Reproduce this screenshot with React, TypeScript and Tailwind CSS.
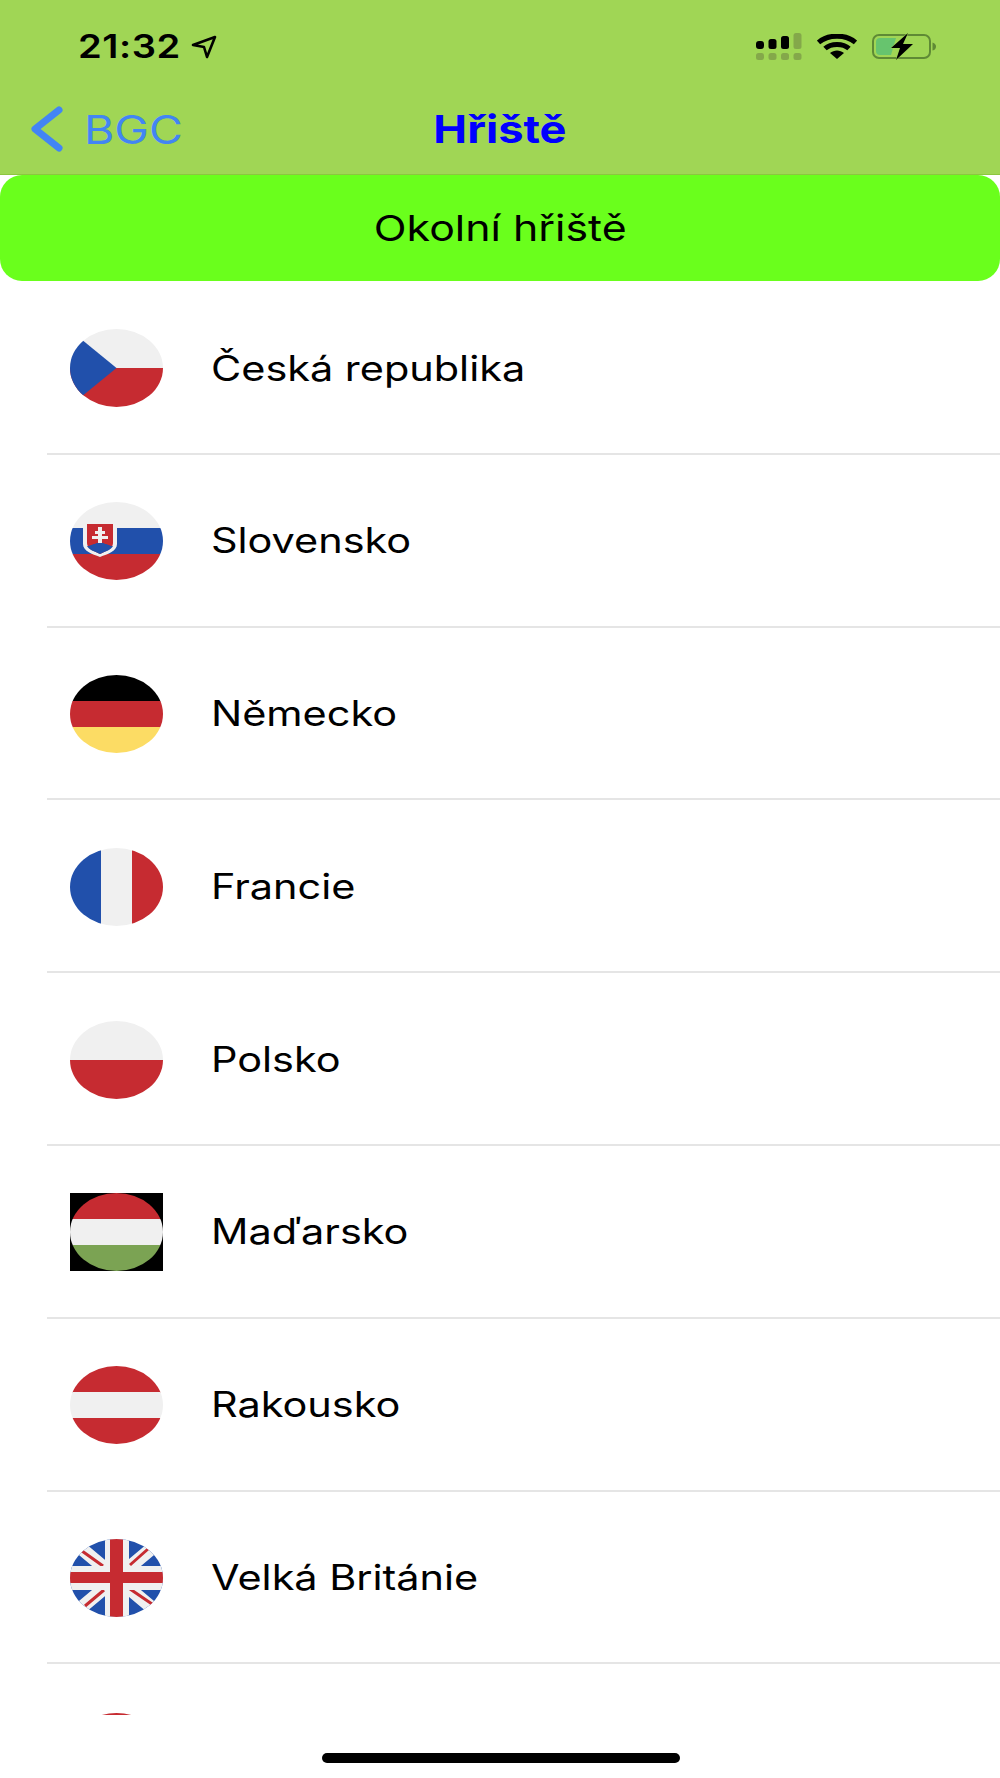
import React from 'react';

const BLUE = '#2150ab';
const RED = '#c62b31';
const WHITE = '#f0f0f0';

const Stripes = ({ colors }: { colors: string[] }) => (
  <>
    {colors.map((c, i) => (
      <rect key={i} x="0" y={(i * 78) / colors.length} width="93" height={78 / colors.length + 0.5} fill={c} />
    ))}
  </>
);

const Flag = ({ code }: { code: string }) => {
  const clipId = `clip-${code}`;
  return (
    <svg viewBox="0 0 93 78" className="w-[93px] h-[78px] shrink-0 mt-[2px]">
      <defs>
        <clipPath id={clipId}>
          <ellipse cx="46.5" cy="39" rx="46.5" ry="39" />
        </clipPath>
      </defs>
      {code === 'hu' && <rect x="0" y="0" width="93" height="78" fill="#000" />}
      <g clipPath={`url(#${clipId})`}>
        {code === 'cz' && (
          <>
            <Stripes colors={[WHITE, RED]} />
            <polygon points="0,1 46.5,39 0,77" fill={BLUE} />
          </>
        )}
        {code === 'sk' && (
          <>
            <Stripes colors={[WHITE, BLUE, RED]} />
            <path d="M13 21 H47 V42 C47 49 38 52 30 55 C22 52 13 49 13 42 Z" fill={WHITE} />
            <path d="M17 22 H43 V41 C43 47 36 49 30 52 C24 49 17 47 17 41 Z" fill={RED} />
            <path d="M17 44 C21 44 22 42 25 42 C27 40 33 40 35 42 C38 42 39 44 43 44 C41 48 36 49 30 52 C24 49 19 48 17 44 Z" fill={BLUE} />
            <path d="M28 25 H32 V29 H35 V32 H32 V34 H38 V37 H32 V41 H28 V37 H22 V34 H28 V32 H25 V29 H28 Z" fill={WHITE} />
          </>
        )}
        {code === 'de' && <Stripes colors={['#000', RED, '#fcdc64']} />}
        {code === 'fr' && (
          <>
            <rect x="0" y="0" width="31" height="78" fill={BLUE} />
            <rect x="31" y="0" width="31" height="78" fill={WHITE} />
            <rect x="62" y="0" width="31" height="78" fill={RED} />
          </>
        )}
        {code === 'pl' && <Stripes colors={[WHITE, RED]} />}
        {code === 'hu' && <Stripes colors={[RED, WHITE, '#7ba353']} />}
        {code === 'at' && <Stripes colors={[RED, WHITE, RED]} />}
        {code === 'gb' && (
          <>
            <rect x="0" y="0" width="93" height="78" fill={BLUE} />
            <path d="M0 0 L93 78 M93 0 L0 78" stroke={WHITE} strokeWidth="13" />
            <path d="M12 12 L33 27 M78 10 L60 26 M15 67 L34 51 M60 50 L82 65" stroke={RED} strokeWidth="3" />
            <rect x="35" y="0" width="24" height="78" fill={WHITE} />
            <rect x="0" y="27" width="93" height="24" fill={WHITE} />
            <rect x="40" y="0" width="13" height="78" fill={RED} />
            <rect x="0" y="33" width="93" height="11" fill={RED} />
          </>
        )}
      </g>
    </svg>
  );
};

const SignalIcon = () => (
  <svg viewBox="0 0 46 27" className="w-[46px] h-[27px]">
    <rect x="0" y="8" width="8" height="8" rx="3" fill="#000" />
    <rect x="12.5" y="6" width="8" height="10" rx="2.5" fill="#000" />
    <rect x="25" y="3" width="8" height="13" rx="2.5" fill="#000" />
    <rect x="37.5" y="0" width="8" height="16" rx="2.5" fill="#84a84a" />
    <rect x="0" y="20" width="8" height="7" rx="2.5" fill="#84a84a" />
    <rect x="12.5" y="20" width="8" height="7" rx="2.5" fill="#84a84a" />
    <rect x="25" y="20" width="8" height="7" rx="2.5" fill="#84a84a" />
    <rect x="37.5" y="20" width="8" height="7" rx="2.5" fill="#84a84a" />
  </svg>
);

const WifiIcon = () => (
  <svg viewBox="0 0 40 25" className="w-[40px] h-[25px]">
    <path d="M1.5 8.5 C11 0 29 0 38.5 8.5" fill="none" stroke="#000" strokeWidth="5" />
    <path d="M8 14.5 C14 9 26 9 32 14.5" fill="none" stroke="#000" strokeWidth="5" />
    <path d="M13 19 L20 25 L27 19 C23 15.5 17 15.5 13 19 Z" fill="#000" />
  </svg>
);

const BatteryIcon = () => (
  <svg viewBox="0 0 65 27" className="w-[65px] h-[27px]">
    <rect x="1" y="2" width="57" height="23" rx="6" fill="none" stroke="#5f8a35" strokeWidth="2" />
    <path d="M4 9 a4 4 0 0 1 4 -4 H24 L19 22 H8 a4 4 0 0 1 -4 -4 Z" fill="#67c46e" />
    <path d="M60.5 9.5 C63 10 64 12 64 13.5 C64 15 63 17 60.5 17.5 Z" fill="#5f8a35" />
    <path d="M36 0 L19 15 H28 L24 27 L41 11 H31 Z" fill="#000" stroke="#a0d655" strokeWidth="1" paintOrder="stroke" />
  </svg>
);

const countries = [
  { code: 'cz', name: 'Česká republika' },
  { code: 'sk', name: 'Slovensko' },
  { code: 'de', name: 'Německo' },
  { code: 'fr', name: 'Francie' },
  { code: 'pl', name: 'Polsko' },
  { code: 'hu', name: 'Maďarsko' },
  { code: 'at', name: 'Rakousko' },
  { code: 'gb', name: 'Velká Británie' },
];

export default function App() {
  return (
    <div className="w-full h-screen bg-white flex flex-col overflow-hidden relative font-['Inter',sans-serif] text-black">
      {/* Header */}
      <div className="h-[175px] shrink-0 bg-[#a0d655] border-b border-[#8cc63f] flex flex-col">
        <div className="h-[93px] pl-[78px] pr-[63px] flex items-center justify-between">
          <div className="flex items-center gap-[27px]">
            <span className="text-[32px] leading-none font-semibold tracking-[0.5px] scale-x-[1.19] origin-left">21:32</span>
            <svg viewBox="0 0 26 24" className="w-[26px] h-[24px]">
              <path d="M2 10 L24 2 L16 22 L13 12 Z" fill="none" stroke="#000" strokeWidth="2.6" strokeLinejoin="round" />
            </svg>
          </div>
          <div className="flex items-center gap-[15px]">
            <SignalIcon />
            <WifiIcon />
            <BatteryIcon />
          </div>
        </div>
        <div className="grid grid-cols-[1fr_auto_1fr] items-center pl-[30px] pr-[30px] pt-[13px]">
          <div className="flex items-center gap-[21px]">
            <svg viewBox="0 0 33 46" className="w-[33px] h-[46px]">
              <path d="M29 4 L5 23 L29 42" fill="none" stroke="#4285f4" strokeWidth="7" strokeLinecap="round" strokeLinejoin="round" />
            </svg>
            <span className="text-[39px] leading-none text-[#4285f4] scale-x-[1.19] origin-left">BGC</span>
          </div>
          <span className="text-[38px] leading-none font-bold text-[#0000ff] scale-x-[1.19]">Hřiště</span>
          <div />
        </div>
      </div>

      {/* Button */}
      <div className="h-[106px] shrink-0 bg-[#6aff1c] rounded-[22px] flex items-center justify-center">
        <span className="text-[36px] leading-none scale-x-[1.19]">Okolní hřiště</span>
      </div>

      {/* List */}
      <div className="h-[1434px] shrink-0 overflow-hidden pt-[1px]">
        {countries.map((c) => (
          <div key={c.code} className="h-[172.8px] ml-[47px] pl-[23px] border-b-2 border-[#e5e5e5] flex items-center gap-[48px]">
            <Flag code={c.code} />
            <span className="text-[34.8px] leading-none pt-[1px] scale-x-[1.19] origin-left">{c.name}</span>
          </div>
        ))}
        <div className="h-[172.8px] ml-[47px] pl-[23px] flex items-center">
          <Flag code="at" />
        </div>
      </div>

      {/* Home indicator */}
      <div className="absolute bottom-[15px] left-[322px] w-[358px] h-[10px] rounded-full bg-black" />
    </div>
  );
}
